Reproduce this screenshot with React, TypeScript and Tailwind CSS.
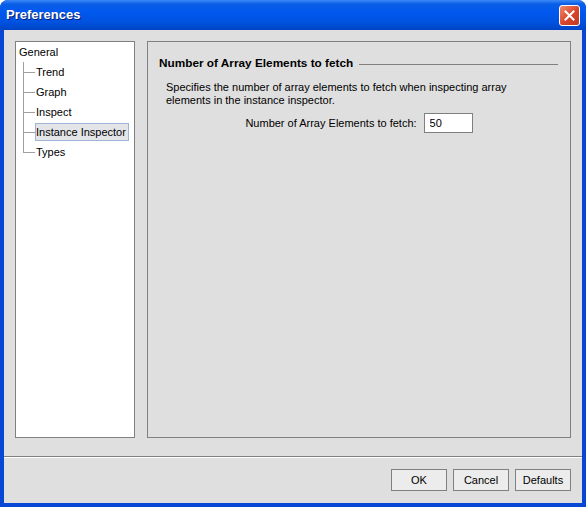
import { useState } from "react";

const pages = ["Trend", "Graph", "Inspect", "Instance Inspector", "Types"];

function CloseButton() {
  return (
    <button className="w-[21px] h-[21px] rounded-[3px] border border-white bg-[linear-gradient(135deg,#f08a6c,#d9442a_55%,#c23a22)] flex items-center justify-center">
      <svg width="11" height="11" viewBox="0 0 11 11">
        <path d="M1.5 1.5 L9.5 9.5 M9.5 1.5 L1.5 9.5" stroke="white" strokeWidth="2" strokeLinecap="square" />
      </svg>
    </button>
  );
}

function Tree({ selected, onSelect }: { selected: string; onSelect: (s: string) => void }) {
  return (
    <div className="w-[120px] h-full bg-white border border-[#808080] pl-[3px]">
      <div className="h-[20px] leading-[20px]">General</div>
      <div className="relative">
        {/* vertical connector from root to the last child */}
        <div className="absolute left-[4px] top-0 h-[90px] w-px bg-[#a0a0a0]" />
        {pages.map((p) => (
          <div key={p} className="relative h-[20px] flex items-center pl-[16px]">
            <div className="absolute left-[4px] top-[10px] w-[12px] h-px bg-[#a0a0a0]" />
            <span
              onClick={() => onSelect(p)}
              className={`h-[18px] leading-[16px] pr-[2px] border cursor-default ${
                selected === p ? "bg-[#e4e5e8] border-[#9fb4d2]" : "border-transparent"
              }`}
            >
              {p}
            </span>
          </div>
        ))}
      </div>
    </div>
  );
}

export default function App() {
  const [selected, setSelected] = useState("Instance Inspector");
  const [count, setCount] = useState("50");

  return (
    <div
      className="w-[586px] h-[507px] flex flex-col bg-[#0747d4] rounded-t-[8px] overflow-hidden text-[11px] text-black"
      style={{ fontFamily: '"Liberation Sans", Arial, sans-serif' }}
    >
      {/* Title bar */}
      <div className="h-[30px] shrink-0 flex items-center justify-between pl-[6px] pr-[6px] bg-[linear-gradient(180deg,#3d8af7_0px,#0a5ee6_4px,#0058ee_12px,#0052e0_22px,#0044c4_30px)]">
        <span className="text-white font-bold text-[13px] [text-shadow:1px_1px_0_#0a1e6e]">Preferences</span>
        <CloseButton />
      </div>

      {/* Client area */}
      <div className="flex-1 mx-[4px] mb-[4px] bg-[#dfdfdf] flex flex-col">
        <div className="h-[397px] mt-[11px] mx-[11px] flex gap-[12px]">
          <Tree selected={selected} onSelect={setSelected} />

          <div className="flex-1 border border-[#808080] px-[11px] pt-[15px]">
            <div className="flex items-center gap-[6px] h-[14px]">
              <span className="font-bold text-[11.8px]">Number of Array Elements to fetch</span>
              <div className="flex-1 h-px bg-[#808080] mr-[1px]" />
            </div>
            <p className="mt-[10px] ml-[7px] leading-[13px]">
              Specifies the number of array elements to fetch when inspecting array
              <br />
              elements in the instance inspector.
            </p>
            <div className="mt-[6px] flex items-center justify-center gap-[7px]">
              <span>Number of Array Elements to fetch:</span>
              <input
                value={count}
                onChange={(e) => setCount(e.target.value)}
                className="w-[49px] h-[20px] bg-white border border-[#7f7f7f] px-[5px] outline-none"
              />
            </div>
          </div>
        </div>

        <div className="mt-[18px] border-t border-[#808080] border-b border-b-white" />

        <div className="flex justify-end gap-[6px] pt-[11px] pr-[11px]">
          {["OK", "Cancel", "Defaults"].map((b) => (
            <button
              key={b}
              className="w-[56px] h-[22px] bg-[#ececec] border border-[#808080] text-[11px]"
            >
              {b}
            </button>
          ))}
        </div>
      </div>
    </div>
  );
}
